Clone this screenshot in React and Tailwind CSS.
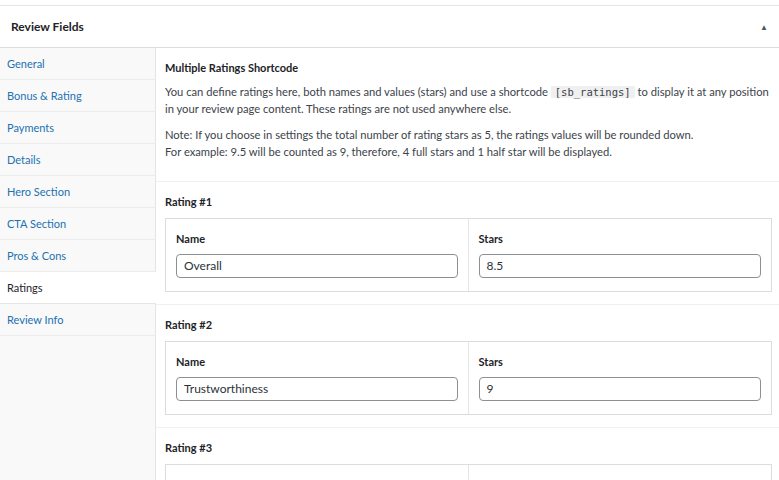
const tabs = [
  "General",
  "Bonus & Rating",
  "Payments",
  "Details",
  "Hero Section",
  "CTA Section",
  "Pros & Cons",
  "Ratings",
  "Review Info",
];

const ratings = [
  { name: "Overall", stars: "8.5" },
  { name: "Trustworthiness", stars: "9" },
  { name: "", stars: "" },
];

function RatingRow({ index, name, stars }) {
  return (
    <div className="border-b border-[#f0f0f1] pl-[9px] pr-[7px] pt-[12px] pb-[12px]">
      <h4 className="text-[11px] font-bold text-[#1d2327] leading-[16px]">Rating #{index}</h4>
      <div className="mt-[8px] grid grid-cols-2 border border-[#dcdcde]">
        <div className="border-r border-[#e5e5e5] px-[10px] pt-[12px] pb-[13px]">
          <div className="text-[11px] font-bold text-[#1d2327] leading-[16px]">Name</div>
          <div className="mt-[7px] h-[24px] rounded-[4px] border border-[#8c8f94] px-[7px] text-[12px] leading-[22px] text-[#2c3338]">
            {name}
          </div>
        </div>
        <div className="px-[10px] pt-[12px] pb-[13px]">
          <div className="text-[11px] font-bold text-[#1d2327] leading-[16px]">Stars</div>
          <div className="mt-[7px] h-[24px] rounded-[4px] border border-[#8c8f94] px-[7px] text-[12px] leading-[22px] text-[#2c3338]">
            {stars}
          </div>
        </div>
      </div>
    </div>
  );
}

export default function App() {
  return (
    <div className="h-[480px] overflow-hidden bg-white font-['Lato','Open_Sans',sans-serif]">
      <div className="mt-[5px] border-t border-[#e5e5e5]">
        <div className="flex h-[42px] items-center justify-between border-b border-[#dcdcde] px-[11px]">
          <h2 className="text-[12px] font-bold text-[#1d2327]">Review Fields</h2>
          <span className="text-[8px] text-[#50575e]">▲</span>
        </div>
        <div className="flex">
          <ul className="w-[156px] shrink-0 min-h-[440px] border-r border-[#e5e5e5] bg-[#f9f9f9]">
            {tabs.map((t) =>
              t === "Ratings" ? (
                <li
                  key={t}
                  className="-mr-px h-[32px] border-b border-[#e5e5e5] bg-white px-[7px] text-[11px] leading-[31px] text-[#1d2327]"
                >
                  {t}
                </li>
              ) : (
                <li
                  key={t}
                  className="h-[32px] border-b border-[#ececec] px-[7px] text-[11px] leading-[31px] text-[#2271b1]"
                >
                  {t}
                </li>
              )
            )}
          </ul>
          <div className="flex-1 min-w-0">
            <div className="border-b border-[#f0f0f1] pl-[9px] pr-[7px] pt-[11px] pb-[21px] text-[11.2px] leading-[17px] text-[#3c434a]">
              <h3 className="text-[11px] font-bold text-[#1d2327]">Multiple Ratings Shortcode</h3>
              <p className="mt-[7px]">
                You can define ratings here, both names and values (stars) and use a shortcode{" "}
                <code className="bg-[#f0f0f1] px-[4px] font-['DejaVu_Sans_Mono',monospace] text-[10.5px] leading-[13px]">
                  [sb_ratings]
                </code>{" "}
                to display it at any position in your review page content. These ratings are not used anywhere else.
              </p>
              <p className="mt-[9px]">
                Note: If you choose in settings the total number of rating stars as 5, the ratings values will be
                rounded down.
                <br />
                For example: 9.5 will be counted as 9, therefore, 4 full stars and 1 half star will be displayed.
              </p>
            </div>
            {ratings.map((r, i) => (
              <RatingRow key={i} index={i + 1} name={r.name} stars={r.stars} />
            ))}
          </div>
        </div>
      </div>
    </div>
  );
}
